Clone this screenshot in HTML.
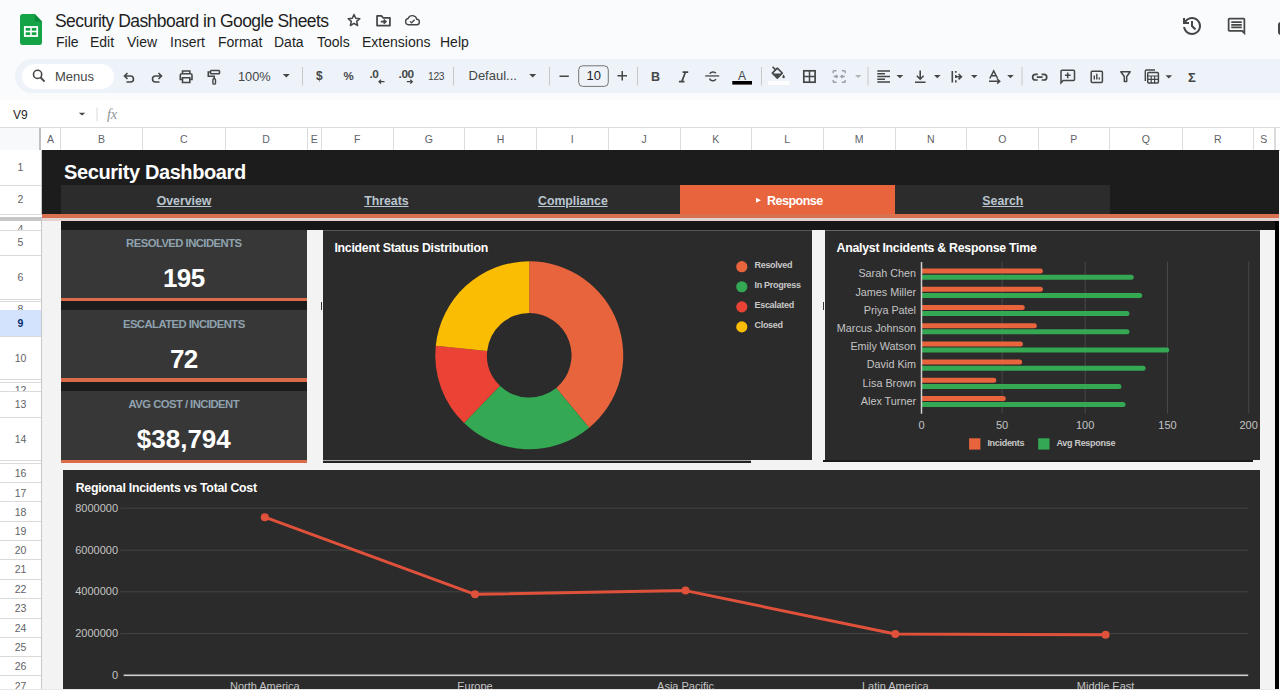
<!DOCTYPE html>
<html><head><meta charset="utf-8">
<style>
*{box-sizing:border-box;margin:0;padding:0}
html,body{width:1280px;height:690px;overflow:hidden;background:#f9fbfd;font-family:"Liberation Sans",sans-serif}
.a{position:absolute;white-space:nowrap;line-height:1}
svg{position:absolute;overflow:visible}
.menu{font-size:14px;color:#1f1f1f;top:34.5px}
.tb{position:absolute;top:64px}
.sep{position:absolute;top:67px;width:1px;height:19px;background:#c7c7c7}
.ch{position:absolute;top:128px;height:22px;border-right:1px solid #dcdcdc;font-size:10.5px;color:#5f6368;text-align:center;line-height:22px;background:#fff}
.rh{position:absolute;left:0;width:41px;font-size:10.5px;color:#5f6368;text-align:center;overflow:hidden}
.lab{font-size:11px;color:#c4c4c4}
</style></head><body>
<!-- ===== title bar ===== -->
<svg style="left:20px;top:14px" width="22" height="31" viewBox="0 0 23 31" preserveAspectRatio="none">
  <path d="M2.5 0H15.5L23 7.5V28.5A2.5 2.5 0 0 1 20.5 31H2.5A2.5 2.5 0 0 1 0 28.5V2.5A2.5 2.5 0 0 1 2.5 0Z" fill="#15a348"/>
  <path d="M15.5 0V7.5H23Z" fill="#0c8a3c"/>
  <rect x="5" y="13" width="13" height="9" fill="none" stroke="#fff" stroke-width="1.8"/>
  <line x1="5" y1="17.5" x2="18" y2="17.5" stroke="#fff" stroke-width="1.6"/>
  <line x1="11.5" y1="13" x2="11.5" y2="22" stroke="#fff" stroke-width="1.6"/>
</svg>
<div class="a" style="left:55px;top:12.5px;font-size:17.5px;color:#1f1f1f;letter-spacing:-0.55px">Security Dashboard in Google Sheets</div>
<!-- star -->
<svg style="left:347.2px;top:13.2px" width="14" height="14" viewBox="0 0 24 24"><path d="M12 2.5l2.9 6.6 7.1.6-5.4 4.7 1.6 7-6.2-3.7-6.2 3.7 1.6-7L2 9.7l7.1-.6z" fill="none" stroke="#444746" stroke-width="2.6" stroke-linejoin="round"/></svg>
<!-- folder -->
<svg style="left:375.5px;top:14.6px" width="15" height="11.5" viewBox="0 0 16 12.5"><path d="M1 1V11.5H15V3H7.5L6 1Z" fill="none" stroke="#444746" stroke-width="1.9" stroke-linejoin="round"/><path d="M5 7.2H10.2M8.2 5L10.6 7.2L8.2 9.4" fill="none" stroke="#444746" stroke-width="1.8"/></svg>
<!-- cloud -->
<svg style="left:404.3px;top:14.2px" width="16.5" height="12" viewBox="0 0 18 14"><path d="M4.5 12.5H14A3.2 3.2 0 0 0 14.3 6.1A5.3 5.3 0 0 0 4.2 5.2A3.7 3.7 0 0 0 4.5 12.5Z" fill="none" stroke="#444746" stroke-width="1.6"/><path d="M6.3 8.6L8.2 10.3L11.7 6.8" fill="none" stroke="#444746" stroke-width="1.5"/></svg>
<div class="a menu" style="left:56px">File</div>
<div class="a menu" style="left:90px">Edit</div>
<div class="a menu" style="left:127px">View</div>
<div class="a menu" style="left:170px">Insert</div>
<div class="a menu" style="left:218px">Format</div>
<div class="a menu" style="left:274px">Data</div>
<div class="a menu" style="left:317px">Tools</div>
<div class="a menu" style="left:362px">Extensions</div>
<div class="a menu" style="left:440px">Help</div>
<!-- history -->
<svg style="left:1180px;top:14px" width="24" height="24" viewBox="0 -960 960 960"><path d="M480-120q-138 0-240.5-91.5T122-440h82q14 104 92.5 172T480-200q117 0 198.5-81.5T760-480q0-117-81.5-198.5T480-760q-69 0-129 32t-101 88h110v80H120v-240h80v94q51-64 124.5-99T480-840q75 0 140.5 28.5t114 77q48.5 48.5 77 114T840-480q0 75-28.5 140.5t-77 114q-48.5 48.5-114 77T480-120Zm112-192L440-464v-216h80v184l128 128-56 56Z" fill="#444746"/></svg>
<!-- comment -->
<svg style="left:1226px;top:16px" width="21" height="21" viewBox="0 0 24 24"><path d="M21.99 4c0-1.1-.89-2-1.99-2H4c-1.1 0-2 .9-2 2v12c0 1.1.9 2 2 2h14l4 4-.01-18zM20 4v13.17L18.83 16H4V4h16zM6 12h12v2H6zm0-3h12v2H6zm0-3h12v2H6z" fill="#444746"/></svg>
<div style="position:absolute;left:1277.5px;top:21.5px;width:12px;height:13.5px;border:2px solid #444746;border-radius:3px"></div>

<!-- ===== toolbar ===== -->
<div style="position:absolute;left:15px;top:58.7px;width:1300px;height:34.3px;background:#eef2f9;border-radius:17px"></div>
<div style="position:absolute;left:22px;top:64px;width:92px;height:25px;background:#fff;border-radius:13px"></div>

<svg style="left:0;top:0" width="1280" height="100" viewBox="0 0 1280 100">
 <g fill="none" stroke="#444746" stroke-width="1.6">
  <!-- search -->
  <circle cx="37.6" cy="74.4" r="4.1" stroke-width="1.6"/>
  <path d="M40.6 77.5L44.6 81.6" stroke-width="1.8"/>
  <!-- undo -->
  <path d="M127.5 73L124.5 76L127.5 79M124.8 76H130.5A3 3 0 0 1 130.5 82H126.5"/>
  <!-- redo -->
  <path d="M158.5 73L161.5 76L158.5 79M161.2 76H155.5A3 3 0 0 0 155.5 82H159.5"/>
  <!-- print -->
  <path d="M182.5 73.5V71H189.8V73.5M182 79.5H180.3V75.3A1.5 1.5 0 0 1 181.8 73.8H190.5A1.5 1.5 0 0 1 192 75.3V79.5H190.2M182.5 77.8H189.8V82.5H182.5Z"/>
  <!-- paint roller -->
  <rect x="210.5" y="70.5" width="9" height="3.2" rx="0.8"/>
  <path d="M210.5 72H208.3V76.3H214.2V78.8"/>
  <rect x="212.9" y="78.8" width="2.6" height="5.3" rx="0.9" stroke-width="1.4"/>
  <!-- align left -->
  <path d="M877.3 71H890M877.3 73.8H885M877.3 76.5H890M877.3 79.2H885M877.3 82H890" stroke-width="1.4"/>
  <!-- valign bottom -->
  <path d="M920.2 70.5V79M916.8 75.8L920.2 79.2L923.6 75.8M915 82.3H925.5"/>
  <!-- wrap -->
  <path d="M952.3 71V82.5M955.8 71V72.8M955.8 75V78M955.8 80.3V82.5M955.2 76.7H961.2M958.6 74L961.4 76.7L958.6 79.4"/>
  <!-- rotate A -->
  <path d="M989.8 78.5L993.7 70.8L997.6 78.5M991.2 75.8H996.2M989 81.3H999.5M997.2 79L999.7 81.3L997.2 83.6" stroke-width="1.5"/>
  <!-- link -->
  <path d="M1037.8 74.3H1035.5A2.85 2.85 0 0 0 1035.5 80H1037.8M1041.6 74.3H1043.9A2.85 2.85 0 0 1 1043.9 80H1041.6M1036.8 77.15H1042.6" stroke-width="1.7"/>
  <!-- comment plus -->
  <path d="M1061 81.8V71.2A1 1 0 0 1 1062 70.3H1073.5A1 1 0 0 1 1074.5 71.2V79.5A1 1 0 0 1 1073.5 80.4H1063.2L1061 82.8ZM1067.7 72.5V78.2M1064.9 75.3H1070.6" stroke-width="1.5"/>
  <!-- chart -->
  <rect x="1091.2" y="71.3" width="11.2" height="11.2" rx="1" stroke-width="1.5"/>
  <path d="M1094.3 75.5V79.6M1096.8 73.8V79.6M1099.3 77.5V79.6" stroke-width="1.4"/>
  <!-- filter -->
  <path d="M1120.8 71.8H1130.2L1126.7 76.5V81.5H1124.3V76.5Z" stroke-width="1.5" stroke-linejoin="round"/>
  <!-- calc -->
  <path d="M1145.3 81V71.2A1.2 1.2 0 0 1 1146.5 70H1155" stroke-width="1.4"/>
  <rect x="1147.7" y="72.4" width="10.7" height="10.7" rx="1" stroke-width="1.5"/>
  <path d="M1148 76H1158.2M1148 79.3H1158.2M1151.2 76V83M1154.6 76V83" stroke-width="1.2"/>
  <!-- borders -->
  <rect x="803.8" y="70.8" width="11.3" height="11.4" stroke-width="1.7"/>
  <path d="M809.5 70.8V82.2M803.8 76.5H815.1" stroke-width="1.5"/>
  <!-- merge gray -->
  <g stroke="#9aa0a6" stroke-width="1.4">
   <path d="M833.2 70.8H836.5M833.2 82.3H836.5M833.2 70.8V73.3M833.2 80V82.3M845.2 70.8H841.8M845.2 82.3H841.8M845.2 70.8V73.3M845.2 80V82.3"/>
   <path d="M833.6 76.5H837.2M835.8 75L837.5 76.5L835.8 78M844.8 76.5H841.2M842.6 75L840.9 76.5L842.6 78"/>
  </g>
 </g>
 <g fill="#444746">
  <path d="M282.8 74H289.8L286.3 77.6Z"/>
  <path d="M529.2 74H536.2L532.7 77.5Z"/>
  <path d="M896.5 75H903.3L899.9 78.3Z"/>
  <path d="M934 75H940.6L937.3 78.3Z"/>
  <path d="M971 75H977.5L974.25 78.3Z"/>
  <path d="M1007.2 75H1013.7L1010.45 78.3Z"/>
  <path d="M1165.5 75.2H1172.1L1168.8 78.4Z"/>
  <path d="M855 75H861.4L858.2 78Z" fill="#b0b4b8"/>
  <!-- fill bucket -->
  <path d="M772.3 73.1L777.3 68.1L782.3 73.1L777.3 78.1Z" fill="none" stroke="#444746" stroke-width="1.5" stroke-linejoin="round"/>
  <path d="M773 73.4H781.6L777.3 77.6Z"/>
  <path d="M772.6 66.8L775.9 70.1" stroke="#444746" stroke-width="1.5"/>
  <path d="M783.6 74.6C782.9 75.8 782.4 76.4 782.4 77A1.2 1.2 0 0 0 784.8 77C784.8 76.4 784.3 75.8 783.6 74.6Z"/>
  <rect x="732.3" y="81" width="19.7" height="3.6" fill="#000"/>
  <rect x="768" y="81" width="21.5" height="3.8" fill="#fff"/>
  <!-- strikethrough -->
  <path d="M705.2 75.3H719.2V76.6H705.2Z"/>
 </g>
 <path d="M709.8 73.8A3.3 2.6 0 0 1 715.8 73.3M709.6 78.5A3.4 2.9 0 0 0 715.9 79.2" fill="none" stroke="#444746" stroke-width="1.5"/>
 <!-- separators -->
 <g fill="#c7c7c7">
  <rect x="302" y="67" width="1" height="18.5"/>
  <rect x="453" y="67" width="1" height="18.5"/>
  <rect x="549" y="67" width="1" height="18.5"/>
  <rect x="637" y="67" width="1" height="18.5"/>
  <rect x="761" y="67" width="1" height="18.5"/>
  <rect x="867.5" y="67" width="1" height="18.5"/>
  <rect x="1021.5" y="67" width="1" height="18.5"/>
 </g>
 <!-- font size box -->
 <rect x="578.7" y="65.8" width="29.6" height="20.6" rx="4" fill="none" stroke="#747775" stroke-width="1"/>
 <path d="M559.5 76.2H568.8M617.5 75.8H627M622.25 71V80.6" stroke="#444746" stroke-width="1.5" fill="none"/>
 <!-- arrows for decimal -->
 <path d="M384.5 81.7H379M381 79.8L379 81.7L381 83.6M406.8 81.7H412.3M410.3 79.8L412.3 81.7L410.3 83.6" stroke="#444746" stroke-width="1.3" fill="none"/>
</svg>
<div class="a" style="left:55px;top:70px;font-size:13px;color:#444746">Menus</div>
<div class="a" style="left:238px;top:71px;font-size:12.8px;color:#444746">100%</div>
<div class="a" style="left:316px;top:70px;font-size:12px;font-weight:700;color:#444746">$</div>
<div class="a" style="left:343.5px;top:70.5px;font-size:11.5px;font-weight:700;color:#444746">%</div>
<div class="a" style="left:369.5px;top:68.6px;font-size:11.8px;font-weight:700;color:#444746;letter-spacing:-0.6px">.0</div>
<div class="a" style="left:398.5px;top:68.6px;font-size:11.8px;font-weight:700;color:#444746;letter-spacing:-0.4px">.00</div>
<div class="a" style="left:428px;top:72px;font-size:10.3px;color:#444746;letter-spacing:-0.3px">123</div>
<div class="a" style="left:468.5px;top:69.2px;font-size:13px;color:#444746">Defaul...</div>
<div class="a" style="left:586.5px;top:69.3px;font-size:13px;color:#1f1f1f">10</div>
<div class="a" style="left:651px;top:70.5px;font-size:12.5px;font-weight:700;color:#444746">B</div>
<svg style="left:0;top:0" width="700" height="100"><path d="M682.6 72.2H688.2M678.9 81.6H684.5M685.4 72.2L681.8 81.6" stroke="#444746" stroke-width="1.7" fill="none"/></svg>
<div class="a" style="left:738px;top:69.5px;font-size:12px;color:#444746">A</div>
<div class="a" style="left:1188px;top:70.5px;font-size:13px;font-weight:700;color:#444746">&#931;</div>
<!-- formula bar -->
<div style="position:absolute;left:0;top:100px;width:1280px;height:28px;background:#fff"></div>
<div class="a" style="left:13px;top:108.5px;font-size:12px;color:#1f1f1f">V9</div>
<svg style="left:0;top:0" width="130" height="130"><path d="M78.8 112.8H85.3L82.05 115.6Z" fill="#444746"/><rect x="96.5" y="107.5" width="1" height="14" fill="#dadce0"/></svg>
<div class="a" style="left:107px;top:107px;font-size:14.5px;color:#8f9499;font-family:'Liberation Serif';font-style:italic;letter-spacing:-0.4px">fx</div>
<!-- col headers -->
<div style="position:absolute;left:0;top:127px;width:1280px;height:1px;background:#dadce0"></div>
<div style="position:absolute;left:0;top:128px;width:38.5px;height:22px;background:#f8f9fa"></div>
<div style="position:absolute;left:38.5px;top:128px;width:3px;height:22px;background:#c0c0c0"></div>
<div class="ch" style="left:41px;width:20px">A</div>
<div class="ch" style="left:61px;width:82px">B</div>
<div class="ch" style="left:143px;width:82.5px">C</div>
<div class="ch" style="left:225.5px;width:82.0px">D</div>
<div class="ch" style="left:307.5px;width:14.5px">E</div>
<div class="ch" style="left:322px;width:71.5px">F</div>
<div class="ch" style="left:393.5px;width:71.75px">G</div>
<div class="ch" style="left:465.25px;width:71.75px">H</div>
<div class="ch" style="left:537px;width:71.5px">I</div>
<div class="ch" style="left:608.5px;width:72.0px">J</div>
<div class="ch" style="left:680.5px;width:71.5px">K</div>
<div class="ch" style="left:752px;width:71.5px">L</div>
<div class="ch" style="left:823.5px;width:72.0px">M</div>
<div class="ch" style="left:895.5px;width:71.5px">N</div>
<div class="ch" style="left:967px;width:71.5px">O</div>
<div class="ch" style="left:1038.5px;width:71.75px">P</div>
<div class="ch" style="left:1110.25px;width:72.25px">Q</div>
<div class="ch" style="left:1182.5px;width:71.5px">R</div>
<div class="ch" style="left:1254px;width:20.5px">S</div>
<div style="position:absolute;left:1274.5px;top:128px;width:6px;height:22px;background:#fff;border-left:1px solid #dcdcdc"></div>
<div style="position:absolute;left:0;top:149.5px;width:1280px;height:1px;background:#c8c8c8"></div>
<!-- row headers -->
<div style="position:absolute;left:0;top:150px;width:41px;height:540px;background:#fff"></div>
<div class="rh" style="top:150.0px;height:35.4px;line-height:35.4px;">1</div>
<div style="position:absolute;left:0;top:184.9px;width:41px;height:1px;background:#dadada"></div>
<div class="rh" style="top:185.4px;height:28.6px;line-height:28.6px;">2</div>
<div style="position:absolute;left:0;top:213.5px;width:41px;height:1px;background:#dadada"></div>
<div class="rh" style="top:221.3px;height:9.1px;line-height:17px;">4</div>
<div style="position:absolute;left:0;top:229.9px;width:41px;height:1px;background:#dadada"></div>
<div class="rh" style="top:230.4px;height:24.9px;line-height:24.9px;">5</div>
<div style="position:absolute;left:0;top:254.8px;width:41px;height:1px;background:#dadada"></div>
<div class="rh" style="top:255.3px;height:44.2px;line-height:44.2px;">6</div>
<div style="position:absolute;left:0;top:299.0px;width:41px;height:1px;background:#dadada"></div>
<div class="rh" style="top:299.5px;height:1.7px;line-height:20.0px;">7</div>
<div style="position:absolute;left:0;top:300.7px;width:41px;height:1px;background:#dadada"></div>
<div class="rh" style="top:301.2px;height:8.8px;line-height:17px;">8</div>
<div style="position:absolute;left:0;top:309.5px;width:41px;height:1px;background:#dadada"></div>
<div class="rh" style="top:310.0px;height:26.5px;line-height:26.5px;background:#d3e3fd;color:#062e6f;font-weight:700;">9</div>
<div style="position:absolute;left:0;top:336.0px;width:41px;height:1px;background:#dadada"></div>
<div class="rh" style="top:336.5px;height:42.8px;line-height:42.8px;">10</div>
<div style="position:absolute;left:0;top:378.8px;width:41px;height:1px;background:#dadada"></div>
<div class="rh" style="top:379.3px;height:3.0px;line-height:20.0px;">11</div>
<div style="position:absolute;left:0;top:381.8px;width:41px;height:1px;background:#dadada"></div>
<div class="rh" style="top:382.3px;height:9.0px;line-height:17px;">12</div>
<div style="position:absolute;left:0;top:390.8px;width:41px;height:1px;background:#dadada"></div>
<div class="rh" style="top:390.9px;height:26.7px;line-height:26.7px;">13</div>
<div style="position:absolute;left:0;top:417.1px;width:41px;height:1px;background:#dadada"></div>
<div class="rh" style="top:417.6px;height:42.8px;line-height:42.8px;">14</div>
<div style="position:absolute;left:0;top:459.9px;width:41px;height:1px;background:#dadada"></div>
<div class="rh" style="top:460.4px;height:2.6px;line-height:20.0px;">15</div>
<div style="position:absolute;left:0;top:462.5px;width:41px;height:1px;background:#dadada"></div>
<div class="rh" style="top:463.0px;height:19.5px;line-height:21.5px;">16</div>
<div style="position:absolute;left:0;top:482.0px;width:41px;height:1px;background:#dadada"></div>
<div class="rh" style="top:482.5px;height:19.2px;line-height:21.2px;">17</div>
<div style="position:absolute;left:0;top:501.2px;width:41px;height:1px;background:#dadada"></div>
<div class="rh" style="top:501.7px;height:19.3px;line-height:21.3px;">18</div>
<div style="position:absolute;left:0;top:520.5px;width:41px;height:1px;background:#dadada"></div>
<div class="rh" style="top:521.0px;height:19.2px;line-height:21.2px;">19</div>
<div style="position:absolute;left:0;top:539.7px;width:41px;height:1px;background:#dadada"></div>
<div class="rh" style="top:540.2px;height:19.2px;line-height:21.2px;">20</div>
<div style="position:absolute;left:0;top:558.9px;width:41px;height:1px;background:#dadada"></div>
<div class="rh" style="top:559.4px;height:19.6px;line-height:21.6px;">21</div>
<div style="position:absolute;left:0;top:578.5px;width:41px;height:1px;background:#dadada"></div>
<div class="rh" style="top:579.0px;height:19.3px;line-height:21.3px;">22</div>
<div style="position:absolute;left:0;top:597.8px;width:41px;height:1px;background:#dadada"></div>
<div class="rh" style="top:598.3px;height:19.7px;line-height:21.7px;">23</div>
<div style="position:absolute;left:0;top:617.5px;width:41px;height:1px;background:#dadada"></div>
<div class="rh" style="top:618.0px;height:19.0px;line-height:21.0px;">24</div>
<div style="position:absolute;left:0;top:636.5px;width:41px;height:1px;background:#dadada"></div>
<div class="rh" style="top:637.0px;height:19.2px;line-height:21.2px;">25</div>
<div style="position:absolute;left:0;top:655.7px;width:41px;height:1px;background:#dadada"></div>
<div class="rh" style="top:656.2px;height:19.5px;line-height:21.5px;">26</div>
<div style="position:absolute;left:0;top:675.2px;width:41px;height:1px;background:#dadada"></div>
<div class="rh" style="top:675.7px;height:19.3px;line-height:21.3px;">27</div>
<div style="position:absolute;left:0;top:694.5px;width:41px;height:1px;background:#dadada"></div>
<div style="position:absolute;left:41px;top:150px;width:1px;height:540px;background:#c8c8c8"></div>
<div style="position:absolute;left:0;top:214px;width:42px;height:3.3px;background:#fff;border-top:1px solid #dcdcdc"></div>
<div style="position:absolute;left:0;top:217.3px;width:42px;height:4px;background:#c6c6c6"></div>
<!-- ===== dashboard ===== -->
<div style="position:absolute;left:42px;top:150px;width:1236.5px;height:64px;background:#1c1c1c"></div>
<div class="a" style="left:64px;top:162px;font-size:20px;font-weight:700;color:#fff;letter-spacing:-0.4px">Security Dashboard</div>
<div style="position:absolute;left:60.5px;top:185.3px;width:1049.8px;height:28.5px;background:#2c2c2c"></div>
<div style="position:absolute;left:679.7px;top:185.3px;width:215.2px;height:30px;background:#e8643c"></div>
<div class="a" style="left:60.5px;width:247.0px;top:194.5px;text-align:center;font-size:12.3px;font-weight:700;color:#b9c5cf;text-decoration:underline;text-underline-offset:0.5px;text-decoration-thickness:1px">Overview</div>
<div class="a" style="left:307.5px;width:157.75px;top:194.5px;text-align:center;font-size:12.3px;font-weight:700;color:#b9c5cf;text-decoration:underline;text-underline-offset:0.5px;text-decoration-thickness:1px">Threats</div>
<div class="a" style="left:465.25px;width:215.25px;top:194.5px;text-align:center;font-size:12.3px;font-weight:700;color:#b9c5cf;text-decoration:underline;text-underline-offset:0.5px;text-decoration-thickness:1px">Compliance</div>
<div class="a" style="left:895.5px;width:214.75px;top:194.5px;text-align:center;font-size:12.3px;font-weight:700;color:#b9c5cf;text-decoration:underline;text-underline-offset:0.5px;text-decoration-thickness:1px">Search</div>
<div class="a" style="left:767px;top:194.5px;font-size:12.5px;font-weight:700;color:#fff;letter-spacing:-0.5px">Response</div>
<svg style="left:0;top:0" width="800" height="220"><path d="M756 197.8L761 200.3L756 202.8Z" fill="#fff"/></svg>
<div style="position:absolute;left:42px;top:213.8px;width:1236.5px;height:4px;background:#d9704f"></div>
<div style="position:absolute;left:42px;top:217.6px;width:1236.5px;height:3.8px;background:#e3d2d1"></div>
<div style="position:absolute;left:42px;top:221.4px;width:1232.5px;height:470px;background:#f3f3f3"></div>
<div style="position:absolute;left:1274.5px;top:221.4px;width:4.5px;height:470px;background:#000"></div>
<div style="position:absolute;left:60.6px;top:221.4px;width:1214px;height:8.6px;background:#171717"></div>
<div style="position:absolute;left:60.6px;top:230px;width:246.4px;height:232.5px;background:#1c1c1c"></div>
<div style="position:absolute;left:60.6px;top:230px;width:246.4px;height:68px;background:#373737"></div>
<div style="position:absolute;left:60.6px;top:298px;width:246.4px;height:3.4px;background:#dc6b4a"></div>
<div class="a" style="left:60.6px;width:246.4px;text-align:center;top:238.18px;font-size:11.3px;font-weight:700;color:#8fa2ae;letter-spacing:-0.55px">RESOLVED INCIDENTS</div>
<div class="a" style="left:60.6px;width:246.4px;text-align:center;top:264.99px;font-size:26px;font-weight:700;color:#fff;letter-spacing:-0.6px">195</div>
<div style="position:absolute;left:60.6px;top:310px;width:246.4px;height:68.30000000000001px;background:#373737"></div>
<div style="position:absolute;left:60.6px;top:378.3px;width:246.4px;height:3.4px;background:#dc6b4a"></div>
<div class="a" style="left:60.6px;width:246.4px;text-align:center;top:318.68px;font-size:11.3px;font-weight:700;color:#8fa2ae;letter-spacing:-0.55px">ESCALATED INCIDENTS</div>
<div class="a" style="left:60.6px;width:246.4px;text-align:center;top:345.74px;font-size:26px;font-weight:700;color:#fff;letter-spacing:-0.6px">72</div>
<div style="position:absolute;left:60.6px;top:390.5px;width:246.4px;height:69.0px;background:#373737"></div>
<div style="position:absolute;left:60.6px;top:459.5px;width:246.4px;height:3.4px;background:#dc6b4a"></div>
<div class="a" style="left:60.6px;width:246.4px;text-align:center;top:399.18px;font-size:11.3px;font-weight:700;color:#8fa2ae;letter-spacing:-0.55px">AVG COST / INCIDENT</div>
<div class="a" style="left:60.6px;width:246.4px;text-align:center;top:426.24px;font-size:26px;font-weight:700;color:#fff;letter-spacing:0px">$38,794</div>
<div style="position:absolute;left:322.5px;top:230px;width:489.75px;height:230px;background:#2b2b2b;border-top:1px solid #555"></div>
<div style="position:absolute;left:322.5px;top:460px;width:428.5px;height:1px;background:#aaa"></div>
<div style="position:absolute;left:322.5px;top:461px;width:428.5px;height:1.5px;background:#222"></div>
<div style="position:absolute;left:824.75px;top:230px;width:435.25px;height:230px;background:#2b2b2b;border-top:1px solid #666"></div>
<div style="position:absolute;left:823px;top:459.8px;width:430px;height:2.4px;background:#1a1a1a"></div>
<div style="position:absolute;left:62.6px;top:470px;width:1197.4px;height:219px;background:#2b2b2b"></div>
<div style="position:absolute;left:0;top:689px;width:1280px;height:1px;background:#e8e8e8"></div>
<div class="a" style="left:334.4px;top:241.74px;font-size:12.3px;font-weight:700;color:#fff;letter-spacing:-0.25px">Incident Status Distribution</div>
<div class="a" style="left:836.6px;top:241.84px;font-size:12.3px;font-weight:700;color:#fff;letter-spacing:-0.25px">Analyst Incidents &amp; Response Time</div>
<div class="a" style="left:75.7px;top:482.24px;font-size:12.3px;font-weight:700;color:#fff;letter-spacing:-0.25px">Regional Incidents vs Total Cost</div>
<svg style="left:0;top:0" width="1280" height="690" viewBox="0 0 1280 690">
<path d="M529.25 261.30A94 94 0 0 1 589.17 427.73L556.21 387.89A42.3 42.3 0 0 0 529.25 313.00Z" fill="#e8643c"/>
<path d="M589.17 427.73A94 94 0 0 1 464.05 423.01L499.91 385.77A42.3 42.3 0 0 0 556.21 387.89Z" fill="#34a853"/>
<path d="M464.05 423.01A94 94 0 0 1 435.72 345.87L487.16 351.05A42.3 42.3 0 0 0 499.91 385.77Z" fill="#ea4335"/>
<path d="M435.72 345.87A94 94 0 0 1 529.25 261.30L529.25 313.00A42.3 42.3 0 0 0 487.16 351.05Z" fill="#fbbc04"/>
<circle cx="741.8" cy="266.70" r="5.6" fill="#e8643c"/>
<circle cx="741.8" cy="286.77" r="5.6" fill="#34a853"/>
<circle cx="741.8" cy="306.84" r="5.6" fill="#ea4335"/>
<circle cx="741.8" cy="326.91" r="5.6" fill="#fbbc04"/>
</svg>
<div class="a" style="left:754.5px;top:260.86px;font-size:9px;font-weight:700;color:#c8c8c8;letter-spacing:-0.3px">Resolved</div>
<div class="a" style="left:754.5px;top:280.93px;font-size:9px;font-weight:700;color:#c8c8c8;letter-spacing:-0.3px">In Progress</div>
<div class="a" style="left:754.5px;top:301.00px;font-size:9px;font-weight:700;color:#c8c8c8;letter-spacing:-0.3px">Escalated</div>
<div class="a" style="left:754.5px;top:321.07px;font-size:9px;font-weight:700;color:#c8c8c8;letter-spacing:-0.3px">Closed</div>
<svg style="left:0;top:0" width="1280" height="690" viewBox="0 0 1280 690">
<rect x="1001.6" y="261.7" width="1" height="151.8" fill="#484848"/>
<rect x="1084.7" y="261.7" width="1" height="151.8" fill="#484848"/>
<rect x="1167.0" y="261.7" width="1" height="151.8" fill="#484848"/>
<rect x="1248.2" y="261.7" width="1" height="151.8" fill="#484848"/>
<path d="M921.5 268.60H1040.39A2.5 2.5 0 0 1 1040.39 273.60H921.5Z" fill="#e8643c"/>
<path d="M921.5 274.70H1131.19A2.5 2.5 0 0 1 1131.19 279.70H921.5Z" fill="#34a853"/>
<path d="M921.5 286.80H1040.39A2.5 2.5 0 0 1 1040.39 291.80H921.5Z" fill="#e8643c"/>
<path d="M921.5 292.90H1139.70A2.5 2.5 0 0 1 1139.70 297.90H921.5Z" fill="#34a853"/>
<path d="M921.5 305.00H1022.23A2.5 2.5 0 0 1 1022.23 310.00H921.5Z" fill="#e8643c"/>
<path d="M921.5 311.10H1126.94A2.5 2.5 0 0 1 1126.94 316.10H921.5Z" fill="#34a853"/>
<path d="M921.5 323.20H1034.34A2.5 2.5 0 0 1 1034.34 328.20H921.5Z" fill="#e8643c"/>
<path d="M921.5 329.30H1126.94A2.5 2.5 0 0 1 1126.94 334.30H921.5Z" fill="#34a853"/>
<path d="M921.5 341.40H1020.43A2.5 2.5 0 0 1 1020.43 346.40H921.5Z" fill="#e8643c"/>
<path d="M921.5 347.50H1166.69A2.5 2.5 0 0 1 1166.69 352.50H921.5Z" fill="#34a853"/>
<path d="M921.5 359.60H1019.61A2.5 2.5 0 0 1 1019.61 364.60H921.5Z" fill="#e8643c"/>
<path d="M921.5 365.70H1143.13A2.5 2.5 0 0 1 1143.13 370.70H921.5Z" fill="#34a853"/>
<path d="M921.5 377.80H993.77A2.5 2.5 0 0 1 993.77 382.80H921.5Z" fill="#e8643c"/>
<path d="M921.5 383.90H1118.92A2.5 2.5 0 0 1 1118.92 388.90H921.5Z" fill="#34a853"/>
<path d="M921.5 396.00H1003.25A2.5 2.5 0 0 1 1003.25 401.00H921.5Z" fill="#e8643c"/>
<path d="M921.5 402.10H1123.01A2.5 2.5 0 0 1 1123.01 407.10H921.5Z" fill="#34a853"/>

<rect x="920.75" y="262" width="1.5" height="151.8" fill="#cfcfcf"/>
<rect x="969.1" y="438.3" width="11.3" height="11.3" fill="#e8643c"/>
<rect x="1038.2" y="438.3" width="11.3" height="11.3" fill="#34a853"/>
<rect x="120.3" y="507.7" width="1128" height="1" fill="#444"/>
<rect x="120.3" y="549.7" width="1128" height="1" fill="#444"/>
<rect x="120.3" y="591.3" width="1128" height="1" fill="#444"/>
<rect x="120.3" y="633.1" width="1128" height="1" fill="#444"/>
<rect x="123.6" y="674.5" width="1124.6" height="1.6" fill="#d0d0d0"/>
<polyline points="264.8,517.2 475,594.3 685.5,590.6 895.3,634 1105.6,634.8" fill="none" stroke="#e0513b" stroke-width="3" stroke-linejoin="round"/>
<circle cx="264.8" cy="517.2" r="4" fill="#e0513b"/>
<circle cx="475" cy="594.3" r="4" fill="#e0513b"/>
<circle cx="685.5" cy="590.6" r="4" fill="#e0513b"/>
<circle cx="895.3" cy="634" r="4" fill="#e0513b"/>
<circle cx="1105.6" cy="634.8" r="4" fill="#e0513b"/>
</svg>
<div class="a" style="left:700px;width:216px;text-align:right;top:268.49px;font-size:10.8px;color:#c4c4c4">Sarah Chen</div>
<div class="a" style="left:700px;width:216px;text-align:right;top:286.69px;font-size:10.8px;color:#c4c4c4">James Miller</div>
<div class="a" style="left:700px;width:216px;text-align:right;top:304.89px;font-size:10.8px;color:#c4c4c4">Priya Patel</div>
<div class="a" style="left:700px;width:216px;text-align:right;top:323.09px;font-size:10.8px;color:#c4c4c4">Marcus Johnson</div>
<div class="a" style="left:700px;width:216px;text-align:right;top:341.29px;font-size:10.8px;color:#c4c4c4">Emily Watson</div>
<div class="a" style="left:700px;width:216px;text-align:right;top:359.49px;font-size:10.8px;color:#c4c4c4">David Kim</div>
<div class="a" style="left:700px;width:216px;text-align:right;top:377.69px;font-size:10.8px;color:#c4c4c4">Lisa Brown</div>
<div class="a" style="left:700px;width:216px;text-align:right;top:395.89px;font-size:10.8px;color:#c4c4c4">Alex Turner</div>
<div class="a" style="left:891.5px;width:60px;text-align:center;top:420.29px;font-size:11px;color:#c4c4c4">0</div>
<div class="a" style="left:972.1px;width:60px;text-align:center;top:420.29px;font-size:11px;color:#c4c4c4">50</div>
<div class="a" style="left:1055.2px;width:60px;text-align:center;top:420.29px;font-size:11px;color:#c4c4c4">100</div>
<div class="a" style="left:1137.5px;width:60px;text-align:center;top:420.29px;font-size:11px;color:#c4c4c4">150</div>
<div class="a" style="left:1218.7px;width:60px;text-align:center;top:420.29px;font-size:11px;color:#c4c4c4">200</div>
<div class="a" style="left:987.4px;top:439.26px;font-size:9px;font-weight:700;color:#c8c8c8;letter-spacing:-0.3px">Incidents</div>
<div class="a" style="left:1056.5px;top:439.26px;font-size:9px;font-weight:700;color:#c8c8c8;letter-spacing:-0.3px">Avg Response</div>
<div class="a" style="left:40px;width:78px;text-align:right;top:502.59px;font-size:11px;color:#c4c4c4">8000000</div>
<div class="a" style="left:40px;width:78px;text-align:right;top:544.59px;font-size:11px;color:#c4c4c4">6000000</div>
<div class="a" style="left:40px;width:78px;text-align:right;top:586.19px;font-size:11px;color:#c4c4c4">4000000</div>
<div class="a" style="left:40px;width:78px;text-align:right;top:627.99px;font-size:11px;color:#c4c4c4">2000000</div>
<div class="a" style="left:40px;width:78px;text-align:right;top:669.69px;font-size:11px;color:#c4c4c4">0</div>
<div class="a" style="left:204.8px;width:120px;text-align:center;top:681.19px;font-size:11px;color:#c4c4c4">North America</div>
<div class="a" style="left:415px;width:120px;text-align:center;top:681.19px;font-size:11px;color:#c4c4c4">Europe</div>
<div class="a" style="left:625.5px;width:120px;text-align:center;top:681.19px;font-size:11px;color:#c4c4c4">Asia Pacific</div>
<div class="a" style="left:835.3px;width:120px;text-align:center;top:681.19px;font-size:11px;color:#c4c4c4">Latin America</div>
<div class="a" style="left:1045.6px;width:120px;text-align:center;top:681.19px;font-size:11px;color:#c4c4c4">Middle East</div>
<div style="position:absolute;left:0;top:689px;width:1280px;height:1px;background:#e8e8e8"></div>
<div style="position:absolute;left:321px;top:302px;width:1.3px;height:8px;background:#333"></div>
<div style="position:absolute;left:823px;top:301.7px;width:1.3px;height:8.3px;background:#333"></div>
</body></html>
